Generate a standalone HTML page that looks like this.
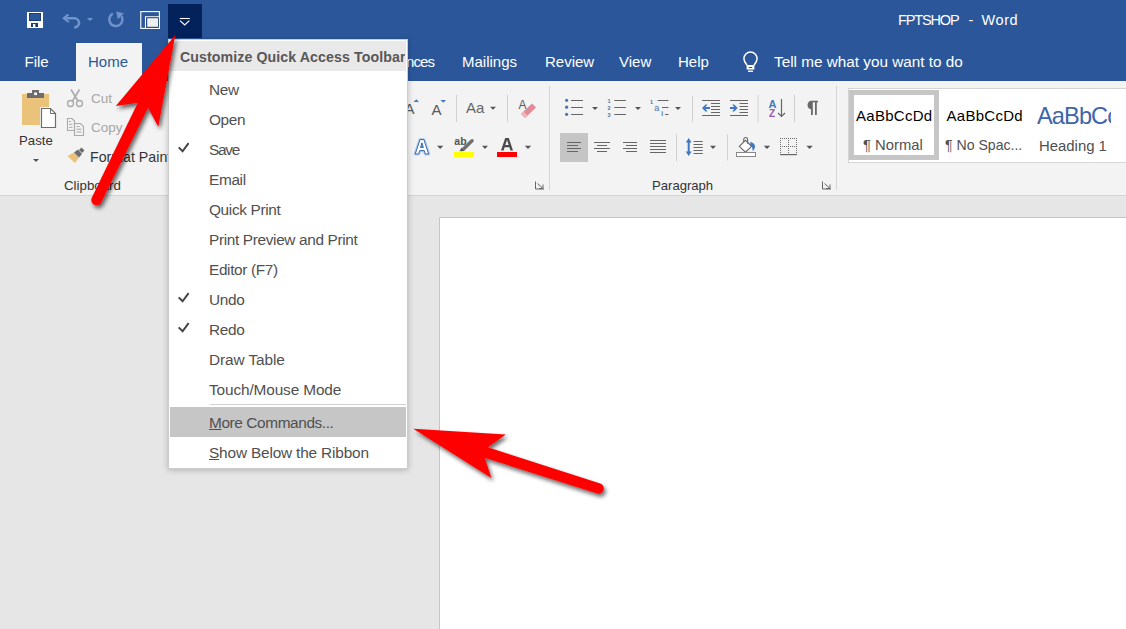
<!DOCTYPE html>
<html><head><meta charset="utf-8">
<style>
*{margin:0;padding:0;box-sizing:border-box}
html,body{width:1126px;height:629px;overflow:hidden;background:#e6e6e6;font-family:"Liberation Sans",sans-serif}
.a{position:absolute}
.t{position:absolute;line-height:1;white-space:nowrap}
#title{left:0;top:0;width:1126px;height:81px;background:#2b579a}
#ribbon{left:0;top:81px;width:1126px;height:115px;background:#f3f3f3;border-bottom:1px solid #d5d5d5}
#page{left:439px;top:217px;width:700px;height:420px;background:#fff;border:1px solid #c6c6c6}
.tab{color:#fff;font-size:15px;top:54px}
.menu{left:168px;top:39px;width:240px;height:430px;background:#fff;border:1px solid rgba(0,0,0,0.2);box-shadow:0 1px 6px rgba(0,0,0,0.24)}
.mi{color:#505050;font-size:15.4px;letter-spacing:-0.35px;left:209px}
.sep{background:#cfcfcf}
</style></head><body>
<div id="title" class="a"></div>
<div id="ribbon" class="a"></div>
<div id="page" class="a"></div>

<!-- QAT -->
<svg class="a" style="left:0;top:0" width="300" height="45" viewBox="0 0 300 45">
  <!-- save -->
  <rect x="27" y="12" width="16" height="16" fill="#fff"/>
  <rect x="29" y="13" width="12" height="8" fill="#1d3f75"/>
  <rect x="30" y="14" width="10" height="6" fill="#2b579a"/>
  <rect x="31" y="23" width="7" height="4" fill="#1d3f75"/>
  <rect x="33" y="24" width="2.3" height="3" fill="#fff"/>
  <!-- undo -->
  <path d="M64.5 18.3 H73.5 A5.2 4.6 0 0 1 74.2 27.5" stroke="#7094ca" stroke-width="2.6" fill="none"/>
  <path d="M62.2 18.2 L67.5 13.8 L69.2 15.5 L64.8 18.2 L69.6 21.3 L68 22.8 Z" fill="#7094ca"/>
  <path d="M86.9 18 H93.1 L90 21 Z" fill="#7094ca"/>
  <!-- redo -->
  <path d="M112.8 13.6 A6.6 6.6 0 1 0 121.6 16.2" stroke="#7094ca" stroke-width="2.5" fill="none"/>
  <path d="M116.2 11.6 L123.8 13.2 L117.8 19.2 Z" fill="#7094ca"/>
  <!-- touch mode -->
  <rect x="140.8" y="11.6" width="18.6" height="16.8" stroke="#fff" stroke-width="1.1" fill="none"/>
  <path d="M145.5 28.4 V16.7 H159.4" stroke="#fff" stroke-width="1.1" fill="none"/>
  <rect x="146.4" y="17.5" width="12.2" height="10.2" fill="#1d3f75"/>
  <rect x="147.2" y="18.2" width="10.8" height="8.6" fill="#eeeeee"/>
  <!-- dropdown button -->
  <rect x="168" y="4" width="34" height="34" fill="#03215a"/>
  <path d="M180 20.6 L184.7 25 L189.4 20.6" stroke="#fff" stroke-width="1.2" fill="none"/>
  <path d="M179.8 18.5 H189.8" stroke="#fff" stroke-width="1.1"/>
</svg>
<div class="t" style="left:898px;top:12.5px;font-size:14.5px;letter-spacing:-1.15px;color:#fff">FPTSHOP</div>
<div class="t" style="left:968.5px;top:12.5px;font-size:14.5px;color:#fff">-</div>
<div class="t" style="left:981.5px;top:12.5px;font-size:14.5px;letter-spacing:0.6px;color:#fff">Word</div>

<!-- tabs -->
<div class="a" style="left:76px;top:43px;width:66px;height:38px;background:#f3f3f3"></div>
<div class="t tab" style="left:24.5px">File</div>
<div class="t tab" style="left:88px;color:#2b579a">Home</div>
<div class="t tab" style="left:406px;letter-spacing:-0.9px">nces</div>
<div class="t tab" style="left:462px">Mailings</div>
<div class="t tab" style="left:545px">Review</div>
<div class="t tab" style="left:619px">View</div>
<div class="t tab" style="left:678px">Help</div>
<svg class="a" style="left:735px;top:47px" width="30" height="30" viewBox="735 47 30 30">
  <path d="M747 65.2 C744.6 62.6 743.9 60.8 743.9 58.6 A6.6 6.6 0 0 1 757.1 58.6 C757.1 60.8 756.4 62.6 754 65.2" stroke="#fff" stroke-width="1.5" fill="none"/>
  <path d="M746.6 65 H754.4 V69.6 H746.6 Z M748.8 67 V68.1 H752.2 V67 Z" fill="#fff" fill-rule="evenodd"/>
  <rect x="748" y="70.5" width="5" height="1.4" fill="#fff"/>
</svg>
<div class="t tab" style="left:774px;font-size:15.3px">Tell me what you want to do</div>

<svg class="a" style="left:0;top:0" width="1126" height="200" viewBox="0 0 1126 200">
  <g fill="none" stroke-linecap="butt">
  <!-- clipboard -->
  <rect x="22" y="94" width="27" height="31" fill="#eac27a"/>
  <rect x="27" y="93" width="17" height="5" fill="#6d6d6d"/>
  <rect x="32" y="90" width="7" height="4" fill="#6d6d6d"/>
  <rect x="34.2" y="92.5" width="2.8" height="2.6" fill="#fff"/>
  <path d="M40 107 H51 L57 113 V129 H40 Z" fill="#f3f3f3"/>
  <path d="M41.5 108.5 H50.5 L55.5 113.5 V127.5 H41.5 Z" fill="#fff" stroke="#6d6d6d" stroke-width="1.2"/>
  <path d="M50.5 108.5 V113.5 H55.5" stroke="#6d6d6d" stroke-width="1"/>
  <path d="M33 159 H39 L36 162 Z" fill="#555"/>
  <!-- scissors -->
  <circle cx="70.5" cy="103.5" r="3" stroke="#a9a9a9" stroke-width="1.3"/>
  <circle cx="79.5" cy="103.5" r="3" stroke="#a9a9a9" stroke-width="1.3"/>
  <path d="M71 89.5 L78 101 M79.5 89.5 L72.5 101" stroke="#a9a9a9" stroke-width="1.6"/>
  <!-- copy -->
  <path d="M67.5 118.5 H72 L74.5 121 V130.5 H67.5 Z" stroke="#a9a9a9" stroke-width="1.1" fill="#f3f3f3"/>
  <path d="M69 121.5 H71 M69 124.3 H72.5 M69 127.3 H72.5" stroke="#a9a9a9" stroke-width="1"/>
  <path d="M74.5 123.5 H80.5 L83.5 126.5 V135.5 H74.5 Z" stroke="#a9a9a9" stroke-width="1.1" fill="#f3f3f3"/>
  <path d="M76.5 126.5 H79.5 M76.5 129.2 H81.5 M76.5 132 H81.5" stroke="#a9a9a9" stroke-width="1"/>
  <!-- format painter -->
  <path d="M67.5 156 L74 152.5 L79 157.5 L75 163 Z" fill="#eac27a"/>
  <path d="M74 152.5 L78 149.5 L82 154 L79 157.5 Z" fill="#6d6d6d"/>
  <path d="M79 150 L81.5 147.5 L84.5 150.5 L82 153 Z" fill="#6d6d6d"/>

  <!-- font group -->
  <text x="404.5" y="114" font-size="15" fill="#595959" font-family="Liberation Sans">A</text>
  <path d="M413.5 102 L416.3 99.3 L419 102 Z" fill="#3f78c2"/>
  <text x="431.5" y="115" font-size="15" fill="#595959" font-family="Liberation Sans">A</text>
  <path d="M440.5 100 H446 L443.3 102.7 Z" fill="#3f78c2"/>
  <path d="M456.5 95 V122" stroke="#d0d0d0" stroke-width="1"/>
  <text x="466" y="113.2" font-size="15" fill="#666" font-family="Liberation Sans">Aa</text>
  <path d="M490 106.7 H496 L493 109.7 Z" fill="#555"/>
  <path d="M507.5 95 V122" stroke="#d0d0d0" stroke-width="1"/>
  <text x="518.5" y="108.8" font-size="12" fill="#595959" font-family="Liberation Sans">A</text>
  <path d="M521 114 L532 103.5 L536 107.5 L525 118 Z" fill="#e48a97"/>
  <path d="M521 114 L523.5 111.5 L527.5 115.5 L525 118 Z" fill="#f0b4bd"/>
  <!-- row2 -->
  <path d="M415.2 154 L420 139.6 H423.9 L428.7 154 H425.3 L424.2 150.6 H419.7 L418.6 154 Z" fill="none" stroke="#b5d0f0" stroke-width="3.2" stroke-linejoin="round"/>
  <path d="M415.2 154 L420 139.6 H423.9 L428.7 154 H425.3 L424.2 150.6 H419.7 L418.6 154 Z M420.6 147.6 L421.95 142.8 L423.3 147.6 Z" fill="#fff" fill-rule="evenodd" stroke="#3a68a5" stroke-width="1" stroke-linejoin="round"/>
  <path d="M420.6 147.6 L421.95 142.8 L423.3 147.6 Z" fill="#4a7fc4"/>
  <path d="M437 145.7 H443.3 L440.2 149 Z" fill="#555"/>
  <text x="454.3" y="144.8" font-size="10.5" font-weight="bold" fill="#555" font-family="Liberation Sans">ab</text>
  <path d="M462 148 L470.8 139.5 Q472.5 138.3 473.5 139.6 Q474.3 140.8 473.2 142 L464.5 150.6 Z" fill="#707070"/><path d="M459.5 151.3 L461.6 147.6 L464.9 150.9 Z" fill="#555"/>
  <rect x="454" y="152" width="20" height="5" fill="#ffff00"/>
  <path d="M482 145.7 H488 L485 149 Z" fill="#555"/>
  <path d="M501 150.6 L505.2 138 H508.8 L513 150.6 H510.4 L509.4 147.3 H504.6 L503.6 150.6 Z M505.3 145.1 L507 139.9 L508.7 145.1 Z" fill="#4a4a4a" fill-rule="evenodd"/>
  <rect x="497" y="152" width="20" height="5" fill="#f00"/>
  <path d="M524.8 145.7 H531.2 L528 149 Z" fill="#555"/>
  <path d="M535.5 181.5 V189 H544 M537.5 183.5 L543 188.5 M543 184.5 V188.5 H539" stroke="#666" stroke-width="1"/>
  <path d="M549.5 86 V190" stroke="#d5d5d5" stroke-width="1"/>

  <!-- paragraph row1 -->
  <g fill="#4b74a8"><circle cx="566.6" cy="100.3" r="1.6"/><circle cx="566.6" cy="107.2" r="1.6"/><circle cx="566.6" cy="114.3" r="1.6"/></g>
  <path d="M571 100.5 H583 M571 107.5 H583 M571 114.5 H583" stroke="#666" stroke-width="1"/>
  <path d="M592 107 H598 L595 110 Z" fill="#555"/>
  <g font-family="Liberation Sans" font-size="5.5" font-weight="bold" fill="#4b74a8"><text x="607.5" y="103">1</text><text x="607.5" y="110">2</text><text x="607.5" y="117">3</text></g>
  <path d="M614.3 100.5 H626 M614.3 107.5 H626 M614.3 114.5 H626" stroke="#666" stroke-width="1"/>
  <path d="M635 107 H641 L638 110 Z" fill="#555"/>
  <g font-family="Liberation Sans" font-weight="bold" fill="#4b74a8"><text x="650" y="103.5" font-size="5.5">1</text><text x="654.2" y="110.5" font-size="9" font-weight="normal">a</text><text x="661.2" y="116" font-size="6.5">i</text></g>
  <path d="M657.6 100.5 H668.5 M662 107.5 H668.5 M665 114.5 H668.5" stroke="#666" stroke-width="1"/>
  <path d="M675 107 H681 L678 110 Z" fill="#555"/>
  <path d="M692.5 96 V122" stroke="#d0d0d0" stroke-width="1"/>
  <!-- indents -->
  <path d="M702 100.5 H720 M711 103.5 H720 M711 106.5 H720 M711 109.5 H720 M711 112.5 H720 M702 115.5 H720" stroke="#666" stroke-width="1"/>
  <path d="M702 108 L705.5 104.5 H707.5 L705.5 107 H710 V109 H705.5 L707.5 111.5 H705.5 Z" fill="#3f78c2"/>
  <path d="M730 100.5 H748 M739.5 103.5 H748 M739.5 106.5 H748 M739.5 109.5 H748 M739.5 112.5 H748 M730 115.5 H748" stroke="#666" stroke-width="1"/>
  <path d="M737.7 108 L734.2 104.5 H732.2 L734.2 107 H730 V109 H734.2 L732.2 111.5 H734.2 Z" fill="#3f78c2"/>
  <path d="M758 95 V122" stroke="#d0d0d0" stroke-width="1"/>
  <text x="768.5" y="107.6" font-size="11" font-weight="bold" fill="#3f78c2" font-family="Liberation Sans">A</text>
  <text x="769" y="116.5" font-size="10" font-weight="bold" fill="#9b59b6" font-family="Liberation Sans">Z</text>
  <path d="M781.5 99 V116.5 M778 113 L781.5 116.5 L785 113" stroke="#666" stroke-width="1.2"/>
  <path d="M794.5 95 V122" stroke="#d0d0d0" stroke-width="1"/>
  <path d="M811.5 100.7 H818 V102.2 H816.8 V115 H815 V102.2 H812.8 V115 H811 V109.2 A4.3 4.3 0 0 1 811.5 100.7 Z" fill="#6a6a6a"/>
  <!-- row2 -->
  <rect x="560" y="133" width="28" height="29" fill="#c5c5c5"/>
  <path d="M567 142.5 H581 M567 145.5 H578 M567 148.5 H581 M567 151.5 H578" stroke="#666" stroke-width="1"/>
  <path d="M594 142.5 H610 M597 145.5 H607 M594 148.5 H610 M597 151.5 H607" stroke="#666" stroke-width="1"/>
  <path d="M623 142.5 H637 M626 145.5 H637 M623 148.5 H637 M626 151.5 H637" stroke="#666" stroke-width="1"/>
  <path d="M650 140.5 H666 M650 143.5 H666 M650 146.5 H666 M650 149.5 H666 M650 152.5 H666" stroke="#666" stroke-width="1"/>
  <path d="M676.5 134 V161" stroke="#d0d0d0" stroke-width="1"/>
  <path d="M688.7 140 V154" stroke="#3f78c2" stroke-width="2"/>
  <path d="M685.8 142.6 L688.7 138 L691.6 142.6 Z M685.8 151.4 L688.7 156 L691.6 151.4 Z" fill="#3f78c2"/>
  <path d="M693.5 141.5 H702.7 M693.5 144.5 H702.7 M693.5 147.5 H702.7 M693.5 150.5 H702.7 M693.5 153.5 H702.7" stroke="#666" stroke-width="1"/>
  <path d="M710 145.8 H716 L713 149 Z" fill="#555"/>
  <path d="M727.5 134.5 V160.5" stroke="#d0d0d0" stroke-width="1"/>
  <!-- shading -->
  <path d="M739.3 146.3 L745.5 140.3 L751.6 146.3 L745.5 152.2 Z" stroke="#666" stroke-width="1.1" fill="#fff"/>
  <path d="M743.7 142 V139.4 A1.95 1.95 0 0 1 747.6 139.4 V143.8" stroke="#666" stroke-width="1.1" fill="none"/>
  <path d="M750.4 141.8 Q755.2 143.3 755 147 Q754.8 149.6 752.7 151.3 Q753 147.6 750.2 144.8 Z" fill="#3f78c2"/>
  <rect x="736.5" y="152.5" width="19" height="4" stroke="#888" stroke-width="1" fill="#fff"/>
  <path d="M763.8 145.8 H770.2 L767 149 Z" fill="#555"/>
  <!-- borders -->
  <g fill="#6a6a6a"><rect x="780" y="138" width="1" height="1"/><rect x="780" y="140" width="1" height="1"/><rect x="780" y="142" width="1" height="1"/><rect x="780" y="144" width="1" height="1"/><rect x="780" y="146" width="1" height="1"/><rect x="780" y="148" width="1" height="1"/><rect x="780" y="150" width="1" height="1"/><rect x="780" y="152" width="1" height="1"/><rect x="782" y="138" width="1" height="1"/><rect x="782" y="146" width="1" height="1"/><rect x="784" y="138" width="1" height="1"/><rect x="784" y="146" width="1" height="1"/><rect x="786" y="138" width="1" height="1"/><rect x="786" y="146" width="1" height="1"/><rect x="788" y="138" width="1" height="1"/><rect x="788" y="140" width="1" height="1"/><rect x="788" y="142" width="1" height="1"/><rect x="788" y="144" width="1" height="1"/><rect x="788" y="146" width="1" height="1"/><rect x="788" y="148" width="1" height="1"/><rect x="788" y="150" width="1" height="1"/><rect x="788" y="152" width="1" height="1"/><rect x="790" y="138" width="1" height="1"/><rect x="790" y="146" width="1" height="1"/><rect x="792" y="138" width="1" height="1"/><rect x="792" y="146" width="1" height="1"/><rect x="794" y="138" width="1" height="1"/><rect x="794" y="146" width="1" height="1"/><rect x="796" y="138" width="1" height="1"/><rect x="796" y="140" width="1" height="1"/><rect x="796" y="142" width="1" height="1"/><rect x="796" y="144" width="1" height="1"/><rect x="796" y="146" width="1" height="1"/><rect x="796" y="148" width="1" height="1"/><rect x="796" y="150" width="1" height="1"/><rect x="796" y="152" width="1" height="1"/></g>
  <rect x="780" y="154" width="17" height="1.2" fill="#666"/>
  <path d="M806.4 145.8 H812.8 L809.6 149 Z" fill="#555"/>
  <path d="M822.5 181.5 V189 H831 M824.5 183.5 L830 188.5 M830 184.5 V188.5 H826" stroke="#666" stroke-width="1"/>
  <path d="M836.5 86 V190" stroke="#d5d5d5" stroke-width="1"/>
  </g>
</svg>

<!-- ribbon: clipboard -->
<div class="t" style="left:19px;top:134px;font-size:13.2px;color:#333">Paste</div>
<div class="t" style="left:91px;top:92px;font-size:13.5px;color:#a6a6a6">Cut</div>
<div class="t" style="left:91px;top:121px;font-size:13.5px;color:#a6a6a6">Copy</div>
<div class="t" style="left:90px;top:150px;font-size:14.2px;color:#333">Format Painter</div>
<div class="t" style="left:64px;top:179px;font-size:13.3px;color:#333">Clipboard</div>
<div class="t" style="left:652px;top:179px;font-size:13.1px;color:#333">Paragraph</div>

<!-- styles gallery -->
<div class="a" style="left:848px;top:88px;width:290px;height:75px;background:#fff;border:1px solid #d5d5d5"></div>
<div class="a" style="left:849px;top:90px;width:90px;height:70px;border:5px solid #c6c6c6"></div>
<div class="t" style="left:856px;top:108px;font-size:15px;letter-spacing:0.28px;color:#000">AaBbCcDd</div>
<div class="t" style="left:946.5px;top:108px;font-size:15px;letter-spacing:0.28px;color:#000">AaBbCcDd</div>
<div class="t" style="left:1037px;top:104.5px;font-size:23.6px;letter-spacing:-0.9px;color:#3f65a8;width:74px;overflow:hidden">AaBbCc</div>
<div class="t" style="left:863px;top:138px;font-size:14.8px;color:#505050">¶ Normal</div>
<div class="t" style="left:945px;top:138px;font-size:14.1px;color:#505050">¶ No Spac...</div>
<div class="t" style="left:1039px;top:138.5px;font-size:14.9px;color:#505050">Heading 1</div>

<!-- menu -->
<div class="a menu"></div>
<div class="a" style="left:170px;top:41px;width:236px;height:30px;background:#e9e9e9"></div>
<div class="t" style="left:180px;top:50px;font-size:14.2px;letter-spacing:0.08px;font-weight:bold;color:#5a5757;width:225px;overflow:hidden">Customize Quick Access Toolbar</div>
<div class="t mi" style="top:82px">New</div>
<div class="t mi" style="top:112px">Open</div>
<div class="t mi" style="top:142px;letter-spacing:-1.25px">Save</div>
<div class="t mi" style="top:172px">Email</div>
<div class="t mi" style="top:202px">Quick Print</div>
<div class="t mi" style="top:232px">Print Preview and Print</div>
<div class="t mi" style="top:262px">Editor (F7)</div>
<div class="t mi" style="top:292px">Undo</div>
<div class="t mi" style="top:322px">Redo</div>
<div class="t mi" style="top:352px;letter-spacing:-0.1px">Draw Table</div>
<div class="t mi" style="top:382px;letter-spacing:-0.13px">Touch/Mouse Mode</div>
<div class="a sep" style="left:210px;top:404px;width:196px;height:1px"></div>
<div class="a" style="left:170px;top:407px;width:236px;height:30px;background:#c6c6c6"></div>
<div class="t mi" style="top:415px;letter-spacing:-0.4px"><u>M</u>ore Commands...</div>
<div class="t mi" style="top:445px;letter-spacing:-0.17px"><u>S</u>how Below the Ribbon</div>
<svg class="a" style="left:168px;top:130px" width="30" height="220" viewBox="0 130 30 220">
  <path d="M178.7 147.4 L182.6 151.3 L188.6 143.2" transform="translate(-168 0)" stroke="#444" stroke-width="2" fill="none"/>
  <path d="M178.7 297.4 L182.6 301.3 L188.6 293.2" transform="translate(-168 0)" stroke="#444" stroke-width="2" fill="none"/>
  <path d="M178.7 327.4 L182.6 331.3 L188.6 323.2" transform="translate(-168 0)" stroke="#444" stroke-width="2" fill="none"/>
</svg>

<!-- arrows -->
<svg class="a" style="left:0;top:0" width="1126" height="629" viewBox="0 0 1126 629">
  <defs><filter id="sh" x="-20%" y="-20%" width="140%" height="140%"><feGaussianBlur in="SourceAlpha" stdDeviation="2"/><feOffset dx="2" dy="2.5"/><feComponentTransfer><feFuncA type="linear" slope="0.6"/></feComponentTransfer><feMerge><feMergeNode/><feMergeNode in="SourceGraphic"/></feMerge></filter></defs>
  <path filter="url(#sh)" fill="#f00" d="M175.3 35 L158.3 126.8 L148.1 107.8 L101.2 202.4 A5.1 5.1 0 0 1 91.8 197.8 L137.8 102.8 L115.8 105.9 Z"/>
  <path filter="url(#sh)" fill="#f00" d="M413.3 428.8 L505.8 434.5 L487.8 447.3 L600.2 483.6 A5 5 0 0 1 597.2 493.4 L484.7 457.8 L491.4 478 Z"/>
</svg>
</body></html>
